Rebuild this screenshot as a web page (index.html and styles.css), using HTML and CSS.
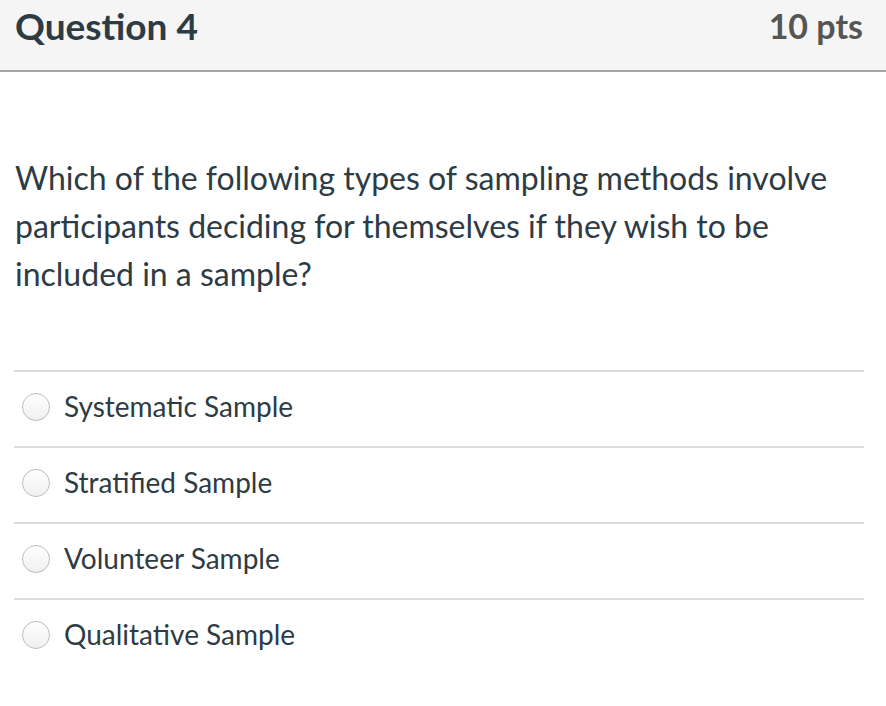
FILE: index.html
```html
<!DOCTYPE html>
<html>
<head>
<meta charset="utf-8">
<link rel="stylesheet" href="styles.css">
</head>
<body>
<div class="quiz">
  <div class="header">
    <span class="title">Question 4</span>
    <span class="points">10 pts</span>
  </div>
  <div class="body">
    <p class="question">Which of the following types of sampling methods involve participants deciding for themselves if they wish to be included in a sample?</p>
    <div class="answers">
      <label class="answer"><span class="radio"></span><span class="label">Systematic Sample</span></label>
      <label class="answer"><span class="radio"></span><span class="label">Stratified Sample</span></label>
      <label class="answer"><span class="radio"></span><span class="label">Volunteer Sample</span></label>
      <label class="answer"><span class="radio"></span><span class="label">Qualitative Sample</span></label>
    </div>
  </div>
</div>
</body>
</html>
```

FILE: styles.css
```css
html, body {
  margin: 0;
  padding: 0;
  background: #ffffff;
}
body {
  font-family: Lato, "Open Sans", sans-serif;
  color: #2d3b45;
}
.header {
  display: flex;
  justify-content: space-between;
  align-items: center;
  height: 70px;
  background: #f5f5f5;
  border-bottom: 2px solid #a5a5a5;
  padding: 0 23px 0 15px;
  box-sizing: content-box;
}
.title {
  font-size: 37px;
  font-weight: 700;
  color: #2d3b45;
  margin-top: -20px;
}
.points {
  font-size: 34px;
  font-weight: 700;
  color: #555555;
  margin-top: -20px;
}
.body {
  padding: 0 22px 0 14px;
}
.question {
  margin: 82px 0 0 1px;
  font-size: 32px;
  line-height: 48px;
  color: #2d3b45;
}
.answers {
  margin-top: 72px;
}
.answer {
  display: flex;
  align-items: center;
  height: 70px;
  padding-bottom: 4px;
  border-top: 2px solid #dddddd;
}
.radio {
  width: 26px;
  height: 26px;
  border-radius: 50%;
  border: 1px solid #bdbdbd;
  background: linear-gradient(#ffffff, #f0f0f0);
  margin-left: 8px;
  margin-right: 14px;
  flex: none;
}
.label {
  font-size: 28px;
  color: #2d3b45;
  margin-bottom: 3px;
}
```
